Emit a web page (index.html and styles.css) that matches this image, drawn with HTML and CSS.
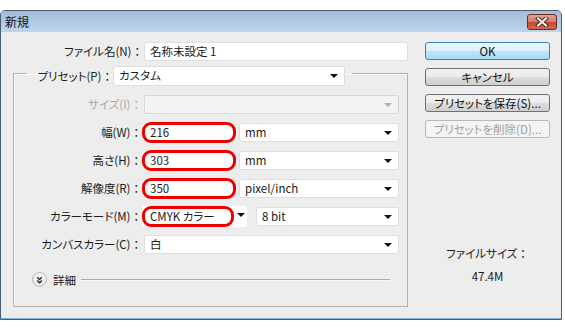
FILE: index.html
```html
<!DOCTYPE html>
<html lang="ja">
<head>
    <meta charset="UTF-8">
    <meta name="viewport" content="width=device-width, initial-scale=1.0">
    <title>新規</title>
    <link rel="stylesheet" href="styles.css">
</head>
<body>
    <div class="window">
        <div class="titlebar">
            <span class="title">新規</span>
            <button type="button" class="close">
                <svg width="14" height="10" viewBox="0 0 14 10">
                    <path d="M3 1.5 L11 8.5 M11 1.5 L3 8.5" stroke="#5a2318" stroke-width="4" stroke-linecap="square"/>
                    <path d="M3 1.5 L11 8.5 M11 1.5 L3 8.5" stroke="#fff" stroke-width="2" stroke-linecap="square"/>
                </svg>
            </button>
        </div>
        <div class="client">
            <div class="main">
                <div class="row">
                    <span class="label">ファイル名(N)<span class="colon">：</span></span>
                    <div class="field name">名称未設定 1</div>
                </div>
                <fieldset class="group">
                    <legend class="group-head">
                        <div class="head-row">
                            <span class="label preset-label">プリセット(P)<span class="colon">：</span></span>
                            <div class="select preset">カスタム<i class="arrow"></i></div>
                        </div>
                    </legend>
                    <div class="row disabled">
                        <span class="label">サイズ(I)<span class="colon">：</span></span>
                        <div class="select full"><i class="arrow"></i></div>
                    </div>
                    <div class="row">
                        <span class="label">幅(W)<span class="colon">：</span></span>
                        <div class="field hl">216</div>
                        <div class="select unit">mm<i class="arrow"></i></div>
                    </div>
                    <div class="row">
                        <span class="label">高さ(H)<span class="colon">：</span></span>
                        <div class="field hl">303</div>
                        <div class="select unit">mm<i class="arrow"></i></div>
                    </div>
                    <div class="row">
                        <span class="label">解像度(R)<span class="colon">：</span></span>
                        <div class="field hl">350</div>
                        <div class="select unit">pixel/inch<i class="arrow"></i></div>
                    </div>
                    <div class="row">
                        <span class="label">カラーモード(M)<span class="colon">：</span></span>
                        <div class="combo">
                            <div class="field hl mode">CMYK カラー</div>
                            <span class="combo-btn"><i class="arrow"></i></span>
                        </div>
                        <div class="select depth">8 bit<i class="arrow"></i></div>
                    </div>
                    <div class="row">
                        <span class="label">カンバスカラー(C)<span class="colon">：</span></span>
                        <div class="select full">白<i class="arrow"></i></div>
                    </div>
                    <div class="details">
                        <span class="chevron">
                            <svg width="14" height="14" viewBox="0 0 14 14">
                                <polyline points="4.5,4 7,6.5 9.5,4" fill="none" stroke="#2a2a2a" stroke-width="1.6"/>
                                <polyline points="4.5,7.5 7,10 9.5,7.5" fill="none" stroke="#2a2a2a" stroke-width="1.6"/>
                            </svg>
                        </span>
                        <span class="details-text">詳細</span>
                        <span class="rule"></span>
                    </div>
                </fieldset>
            </div>
            <div class="side">
                <button type="button" class="btn default">OK</button>
                <button type="button" class="btn">キャンセル</button>
                <button type="button" class="btn">プリセットを保存(S)...</button>
                <button type="button" class="btn" disabled>プリセットを削除(D)...</button>
                <div class="filesize">
                    <div>ファイルサイズ<span class="colon">：</span></div>
                    <div class="size-value">47.4M</div>
                </div>
            </div>
        </div>
    </div>
</body>
</html>
```

FILE: styles.css
```css
body {
    margin: 0;
    background: #fff;
    font-family: "Noto Sans CJK JP", "Noto Sans", sans-serif;
    font-size: 11.5px;
    color: #1b1b1b;
    font-feature-settings: "palt";
}
.colon {
    font-feature-settings: normal;
}
.window {
    margin-top: 10px;
    width: 560px;
    border: 1px solid #4b5d72;
    border-radius: 5px 5px 0 0;
    background: #ededed;
}
.titlebar {
    height: 21px;
    display: flex;
    align-items: center;
    justify-content: space-between;
    padding: 0 4px;
    background: linear-gradient(#a3bcd8, #bfd4ea);
    border-radius: 4px 4px 0 0;
}
.title {
    color: #111;
    font-size: 12px;
}
.close {
    width: 30px;
    height: 16px;
    padding: 0;
    display: flex;
    align-items: center;
    justify-content: center;
    border: 1px solid #6b2a20;
    border-radius: 3px;
    background: linear-gradient(#e3a293 0%, #d47a66 50%, #c2462f 50%, #d26a50 100%);
}
.client {
    display: flex;
    gap: 17px;
    height: 287px;
    box-sizing: border-box;
    padding: 9px 11px 0 12px;
    border-bottom: 1px solid #7fb2d6;
}
.main {
    width: 395px;
}
.row {
    display: flex;
    align-items: center;
    height: 20px;
}
.label {
    width: 130px;
    flex: none;
    text-align: right;
    white-space: nowrap;
}
.field,
.select {
    height: 19px;
    box-sizing: border-box;
    background: #fff;
    border: 1px solid #dedede;
    border-radius: 2px;
    padding-left: 5px;
    line-height: 17px;
    white-space: nowrap;
}
.field.name {
    margin-left: 1px;
    width: 264px;
}
.select {
    position: relative;
    margin-left: 2px;
}
.arrow {
    position: absolute;
    right: 6px;
    top: 7px;
    border-left: 4px solid transparent;
    border-right: 4px solid transparent;
    border-top: 4px solid #111;
}

/* group box */
.group {
    margin: 0;
    padding: 8px 0 19px 0;
    width: 395px;
    box-sizing: border-box;
    min-width: 0;
    border: 1px solid #b2b2b2;
    box-shadow: inset 1px 1px 0 #fafafa;
}
.group-head {
    margin-left: 12px;
    padding: 5px 7px 0 0;
}
.head-row {
    display: flex;
    align-items: center;
}
.group .label {
    width: 128px;
}
.group-head .preset-label {
    width: 87px;
}
.select.preset {
    margin-left: 0;
    width: 232px;
    height: 20px;
}
.group .row {
    margin-top: 8px;
}
.group .row:first-of-type {
    margin-top: 0;
}
.select.full {
    width: 255px;
}
.select.unit {
    margin-left: 3px;
    width: 160px;
}
.select.depth {
    margin-left: 9px;
    width: 143px;
}
.field.hl {
    width: 94px;
    height: 21px;
    border: 3px solid #ee0000;
    border-radius: 9px;
    padding-left: 5px;
    line-height: 15px;
}
.combo {
    display: flex;
    position: relative;
    background: #fff;
    border-radius: 2px;
}
.field.hl.mode {
    width: 92px;
}
.combo-btn {
    position: relative;
    width: 13px;
    height: 19px;
}
.combo-btn .arrow {
    right: 2px;
}
.disabled .label {
    color: #a9a9a9;
}
.disabled .select {
    background: #f3f3f3;
    border-color: #d6d6d6;
}
.disabled .arrow {
    border-top-color: #b3b3b3;
}

/* details */
.details {
    display: flex;
    align-items: center;
    height: 15px;
    margin-top: 18px;
    margin-left: 18px;
    margin-right: 17px;
}
.chevron {
    display: flex;
    width: 15px;
    height: 15px;
    border-radius: 50%;
    box-sizing: border-box;
    border: 1px solid #b9b9b9;
    background: radial-gradient(circle at 50% 35%, #ffffff, #dedede);
    align-items: center;
    justify-content: center;
}
.details-text {
    margin-left: 6px;
}
.rule {
    flex: 1;
    margin-left: 5px;
    border-top: 1px solid #a9a9a9;
    border-bottom: 1px solid #fafafa;
}

/* right column */
.side {
    width: 125px;
    display: flex;
    flex-direction: column;
    gap: 8px;
    padding-top: 1px;
}
.btn {
    height: 18px;
    padding: 0;
    font: inherit;
    font-feature-settings: "palt";
    color: #111;
    line-height: 16px;
    border: 1px solid #707070;
    border-radius: 3px;
    background: linear-gradient(#f2f2f2 0%, #ebebeb 50%, #dddddd 50%, #cfcfcf 100%);
}
.btn.default {
    border-color: #3c7fb1;
    background: linear-gradient(#eaf6fd 0%, #d9f0fc 50%, #bee6fd 50%, #a7d9f5 100%);
}
.btn:disabled {
    border-color: #b5b9bc;
    background: #f4f4f4;
    color: #a0a0a0;
}
.filesize {
    margin-top: 99px;
    text-align: center;
    line-height: 16px;
}
.size-value {
    margin-top: 7px;
}
```
